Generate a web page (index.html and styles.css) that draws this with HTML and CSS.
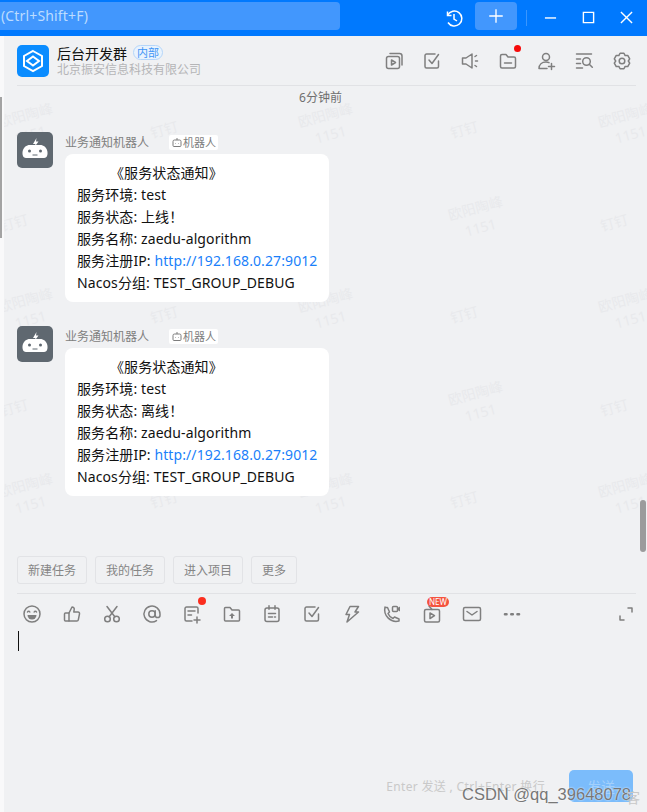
FILE: index.html
```html
<!DOCTYPE html>
<html lang="zh-CN">
<head>
    <meta charset="UTF-8">
    <title>后台开发群</title>
    <link rel="stylesheet" href="styles.css">
</head>
<body>
    <div class="titlebar">
        <div class="search">(Ctrl+Shift+F)</div>
        <svg class="history" viewBox="0 0 20 20"><path d="M3.5 3.5v4h4"/><path d="M3.7 7A7.5 7.5 0 1 1 4 14.5"/><path d="M10 6v5l3 2"/></svg>
        <div class="add"><svg viewBox="0 0 20 20"><path d="M10 2.5v15M2.5 10h15"/></svg></div>
        <div class="sep"></div>
        <div class="win"><svg viewBox="0 0 14 14"><path d="M1 7.5h12"/></svg></div>
        <div class="win"><svg viewBox="0 0 14 14"><path d="M1.5 1.5h11v11h-11z"/></svg></div>
        <div class="win"><svg viewBox="0 0 14 14"><path d="M1 1l12 12M13 1L1 13"/></svg></div>
    </div>

    <div class="main">
        <div class="group-head">
            <svg class="logo" viewBox="0 0 32 32">
                <rect width="32" height="32" rx="5" fill="#0a8cff"/>
                <path d="M16 6l9 5v10l-9 5-9-5V11z" fill="none" stroke="#fff" stroke-width="2"/>
                <path d="M16 11.500l6 4.500-6 4.500-6-4.500z" fill="none" stroke="#fff" stroke-width="2"/>
            </svg>
            <div class="group-info">
                <div class="group-title">后台开发群 <span class="badge">内部</span></div>
                <div class="group-sub">北京振安信息科技有限公司</div>
            </div>
            <div class="head-icons">
                <svg class="ico" viewBox="0 0 20 20"><rect x="2.500" y="5.500" width="13" height="12" rx="2"/><path d="M6 2.500h9.500a2.500 2.500 0 0 1 2.500 2.500v9"/><path d="M7.500 9l4 2.500-4 2.500z"/></svg>
                <svg class="ico" viewBox="0 0 20 20"><path d="M16.500 10v5.500a1.500 1.500 0 0 1-1.500 1.500H4.500A1.500 1.500 0 0 1 3 15.500V4.500A1.500 1.500 0 0 1 4.500 3H13"/><path d="M7 9l3 3.500L16.500 3.500"/></svg>
                <svg class="ico" viewBox="0 0 20 20"><path d="M2.500 7h3.500l6-4v14l-6-4H2.500z"/><path d="M15 5.500l1.500-1M15.500 10h2M15 14.500l1.500 1"/></svg>
                <span class="ico-wrap">
                    <svg class="ico" viewBox="0 0 20 20"><path d="M2.500 5A1.500 1.500 0 0 1 4 3.500h4l2 2.500h6A1.500 1.500 0 0 1 17.500 7.500v8A1.500 1.500 0 0 1 16 17H4a1.500 1.500 0 0 1-1.500-1.500z"/><path d="M6.500 12h7"/></svg>
                    <i class="dot dot-head"></i>
                </span>
                <svg class="ico" viewBox="0 0 20 20"><circle cx="10" cy="6" r="3.500"/><path d="M3 17.500c0-4 3-6.500 7-6.500 1.200 0 2.200.2 3 .6M3 17.500h8"/><path d="M15.500 12.500v6M12.500 15.500h6"/></svg>
                <svg class="ico" viewBox="0 0 20 20"><path d="M2.500 3h15M2.500 8h4M2.500 12.500h4M2.500 17h6"/><circle cx="12.500" cy="10.500" r="3.800"/><path d="M15.300 13.300l3 3"/></svg>
                <svg class="ico" viewBox="0 0 20 20"><path d="M11.940 2.240H8.060L6.850 4.540 4.250 4.440 2.310 7.790 3.700 10 2.310 12.210 4.250 15.560 6.850 15.460 8.060 17.760H11.940L13.150 15.460 15.750 15.560 17.690 12.210 16.300 10 17.690 7.790 15.750 4.440 13.150 4.540z"/><circle cx="10" cy="10" r="2.800"/></svg>
            </div>
        </div>

        <div class="chat">
            <div class="marks">
                <div class="mark">欧阳陶峰<br>1151</div><div class="mark-short">钉钉</div><div class="mark">欧阳陶峰<br>1151</div><div class="mark-short">钉钉</div><div class="mark">欧阳陶峰<br>1151</div>
                <div class="mark-short">钉钉</div><div class="mark">欧阳陶峰<br>1151</div><div class="mark-short">钉钉</div><div class="mark">欧阳陶峰<br>1151</div><div class="mark-short">钉钉</div>
                <div class="mark">欧阳陶峰<br>1151</div><div class="mark-short">钉钉</div><div class="mark">欧阳陶峰<br>1151</div><div class="mark-short">钉钉</div><div class="mark">欧阳陶峰<br>1151</div>
                <div class="mark-short">钉钉</div><div class="mark">欧阳陶峰<br>1151</div><div class="mark-short">钉钉</div><div class="mark">欧阳陶峰<br>1151</div><div class="mark-short">钉钉</div>
                <div class="mark">欧阳陶峰<br>1151</div><div class="mark-short">钉钉</div><div class="mark">欧阳陶峰<br>1151</div><div class="mark-short">钉钉</div><div class="mark">欧阳陶峰<br>1151</div>
            </div>

            <div class="time">6分钟前</div>

            <div class="msg">
                <svg class="avatar" viewBox="0 0 36 36">
                    <rect width="36" height="36" rx="5" fill="#5f6870"/>
                    <path d="M19.500 6l-3.500 6h2.500l-1 3 4-5.500h-2.500z" fill="#fff"/>
                    <path d="M13 13h10c4 0 6 2.500 7 5 1.200 3.500.5 8-3 8H9c-3.500 0-4.200-4.500-3-8 1-2.500 3-5 7-5z" fill="#fff"/>
                    <circle cx="12.500" cy="19" r="1.500" fill="#5f6870"/>
                    <circle cx="23.500" cy="19" r="1.500" fill="#5f6870"/>
                    <path d="M15.500 23h5" stroke="#5f6870" stroke-width="1"/>
                </svg>
                <div>
                    <div class="sender">业务通知机器人
                        <span class="tag"><svg viewBox="0 0 12 12"><path d="M2 5.500a1.500 1.500 0 0 1 1.500-1.500h5A1.500 1.500 0 0 1 10 5.500v4A1 1 0 0 1 9 10.500H3a1 1 0 0 1-1-1zM6 4V2"/><path d="M4.500 7.500h.5M7 7.500h.5"/></svg>机器人</span>
                    </div>
                    <div class="bubble">
                        <div class="notice-title">《服务状态通知》</div>
                        <div>服务环境: test</div>
                        <div>服务状态: 上线！</div>
                        <div>服务名称: zaedu-algorithm</div>
                        <div>服务注册IP: <a href="#">http://192.168.0.27:9012</a></div>
                        <div>Nacos分组: TEST_GROUP_DEBUG</div>
                    </div>
                </div>
            </div>

            <div class="msg">
                <svg class="avatar" viewBox="0 0 36 36">
                    <rect width="36" height="36" rx="5" fill="#5f6870"/>
                    <path d="M19.500 6l-3.500 6h2.500l-1 3 4-5.500h-2.500z" fill="#fff"/>
                    <path d="M13 13h10c4 0 6 2.500 7 5 1.200 3.500.5 8-3 8H9c-3.500 0-4.200-4.500-3-8 1-2.500 3-5 7-5z" fill="#fff"/>
                    <circle cx="12.500" cy="19" r="1.500" fill="#5f6870"/>
                    <circle cx="23.500" cy="19" r="1.500" fill="#5f6870"/>
                    <path d="M15.500 23h5" stroke="#5f6870" stroke-width="1"/>
                </svg>
                <div>
                    <div class="sender">业务通知机器人
                        <span class="tag"><svg viewBox="0 0 12 12"><path d="M2 5.500a1.500 1.500 0 0 1 1.500-1.500h5A1.500 1.500 0 0 1 10 5.500v4A1 1 0 0 1 9 10.500H3a1 1 0 0 1-1-1zM6 4V2"/><path d="M4.500 7.500h.5M7 7.500h.5"/></svg>机器人</span>
                    </div>
                    <div class="bubble">
                        <div class="notice-title">《服务状态通知》</div>
                        <div>服务环境: test</div>
                        <div>服务状态: 离线！</div>
                        <div>服务名称: zaedu-algorithm</div>
                        <div>服务注册IP: <a href="#">http://192.168.0.27:9012</a></div>
                        <div>Nacos分组: TEST_GROUP_DEBUG</div>
                    </div>
                </div>
            </div>

            <div class="scroll-right"></div>
        </div>

        <div class="quick">
            <button class="quick-btn">新建任务</button>
            <button class="quick-btn">我的任务</button>
            <button class="quick-btn">进入项目</button>
            <button class="quick-btn">更多</button>
        </div>

        <div class="toolbar">
            <svg class="ico" viewBox="0 0 20 20"><circle cx="10" cy="10" r="8"/><path d="M5.500 8c.5-1 1.800-1 2.300 0M12.200 8c.5-1 1.800-1 2.300 0"/><path d="M5.500 11h9a4.500 4.500 0 0 1-9 0z" class="fill"/></svg>
            <svg class="ico" viewBox="0 0 20 20"><path d="M7 9l3-6c1.500 0 2.500 1 2.200 2.500L11.800 8H16a1.500 1.500 0 0 1 1.500 1.800l-1.200 6A1.500 1.500 0 0 1 14.800 17H7z"/><path d="M7 9H3.500A1 1 0 0 0 2.500 10v6a1 1 0 0 0 1 1H7"/></svg>
            <svg class="ico" viewBox="0 0 20 20"><circle cx="5.500" cy="15" r="2.800"/><circle cx="14.500" cy="15" r="2.800"/><path d="M7.200 12.800L15 2.500M12.800 12.800L5 2.500"/></svg>
            <svg class="ico" viewBox="0 0 20 20"><circle cx="10" cy="10" r="3.200"/><path d="M13.200 6.800v4.400a2.400 2.400 0 0 0 4.800 0V10a8 8 0 1 0-3.500 6.600"/></svg>
            <span class="ico-wrap">
                <svg class="ico" viewBox="0 0 20 20"><path d="M16 9V4.500A1.500 1.500 0 0 0 14.500 3h-10A1.500 1.500 0 0 0 3 4.500v11A1.500 1.500 0 0 0 4.500 17H10"/><path d="M6 7h7M6 11h3.500"/><path d="M15 13v6M12 16h6"/></svg>
                <i class="dot dot-note"></i>
            </span>
            <svg class="ico" viewBox="0 0 20 20"><path d="M2.500 4.500A1 1 0 0 1 3.500 3.500h4.500l2 2.500h6.500a1 1 0 0 1 1 1v9a1 1 0 0 1-1 1h-13a1 1 0 0 1-1-1z"/><path d="M10 9l3 3h-2v2.500H9V12H7z" class="fill"/></svg>
            <svg class="ico" viewBox="0 0 20 20"><rect x="3" y="4" width="14" height="13.500" rx="2"/><path d="M7 1.800v3.500M13 1.800v3.500M6.500 9.500h7M6.500 13h4M12.500 13h1"/></svg>
            <svg class="ico" viewBox="0 0 20 20"><path d="M16.500 10v5.500a1.500 1.500 0 0 1-1.500 1.500H4.500A1.500 1.500 0 0 1 3 15.500V4.500A1.500 1.500 0 0 1 4.500 3H13"/><path d="M7 9l3 3.500L16.500 3.500"/></svg>
            <svg class="ico" viewBox="0 0 20 20"><path d="M8 2.500h8.500L13 8h3.500L5 18l2.500-7.500H4z"/></svg>
            <svg class="ico" viewBox="0 0 20 20"><path d="M3 3.500h2.500L7.500 8 6 9.500c1 2.500 2.500 4 5 5l1.500-1.500 4.500 2v2c-8 2-16-5-14-14z"/><rect x="10.500" y="2.500" width="5" height="5" rx="1"/><path d="M15.500 4l2.500-1.500v5L15.500 6" class="fill"/></svg>
            <span class="ico-wrap">
                <svg class="ico" viewBox="0 0 20 20"><rect x="2.500" y="5.500" width="15" height="12.500" rx="1.500"/><path d="M7 2l3 3.500"/><path d="M8 9l4.500 2.700L8 14.500z"/></svg>
                <span class="new-tag">NEW</span>
            </span>
            <svg class="ico" viewBox="0 0 20 20"><rect x="1.500" y="3.500" width="17" height="13" rx="1.500"/><path d="M5 7.500l5 3.500 5-3.500"/></svg>
            <svg class="ico" viewBox="0 0 20 20"><path d="M3 10.200h1.500M9.300 10.200h1.500M15.500 10.200H17" stroke-width="2.600"/></svg>
            <svg class="ico expand" viewBox="0 0 14 14"><path d="M9 1h4v4M1 9v4h4"/></svg>
        </div>

        <div class="editor"><div class="caret"></div></div>

        <div class="send-row">
            <span class="hint">Enter 发送 , Ctrl+Enter 换行</span>
            <button class="send">发送</button>
        </div>
    </div>

    <div class="csdn">CSDN @qq_39648078</div>
    <div class="csdn-back">客</div>
    <div class="scroll-left"></div>
</body>
</html>
```

FILE: styles.css
```css
*{
    box-sizing: border-box;
    font-family: "Noto Sans", "Noto Sans CJK SC", sans-serif;
}

body{
    margin: 0;
    height: 812px;
    overflow: hidden;
    display: flex;
    flex-direction: column;
    position: relative;
    background-color: #f0f1f3;
}

.titlebar{
    display: flex;
    align-items: center;
    height: 36px;
    flex-shrink: 0;
    background-color: #0079fe;
}

.search{
    width: 340px;
    height: 28px;
    line-height: 28px;
    margin-top: -4px;
    padding-left: 1px;
    font-size: 14px;
    letter-spacing: .15px;
    color: #bcdcff;
    background-color: #4297fd;
    border-radius: 0 4px 4px 0;
}

.history{
    width: 20px;
    height: 20px;
    margin-left: 104px;
}

.titlebar svg{
    fill: none;
    stroke: #fff;
    stroke-width: 1.5;
}

.add{
    display: flex;
    align-items: center;
    justify-content: center;
    width: 42px;
    height: 28px;
    margin-left: 11px;
    margin-top: -4px;
    background-color: #4297fd;
    border-radius: 4px;
}

.add svg{
    width: 18px;
    height: 18px;
}

.sep{
    width: 1px;
    height: 16px;
    margin: 0 4px 0 9px;
    background-color: #3a96fe;
}

.win{
    display: flex;
    align-items: center;
    justify-content: center;
    width: 38px;
    height: 36px;
}

.win svg{
    width: 13px;
    height: 13px;
    margin-top: -2px;
}

.main{
    flex: 1;
    display: flex;
    flex-direction: column;
    border-left: 4px solid #f9f9fa;
    min-height: 0;
}

.group-head{
    display: flex;
    align-items: center;
    height: 50px;
    flex-shrink: 0;
    margin: 0 11px 0 13px;
    border-bottom: 1px solid #e1e2e5;
}

.logo{
    width: 32px;
    height: 32px;
    margin-right: 8px;
}

.group-title{
    display: flex;
    align-items: center;
    gap: 2px;
    height: 18px;
    font-size: 14px;
    color: #111;
}

.badge{
    height: 15px;
    line-height: 13px;
    padding: 0 3px;
    margin-left: 4px;
    font-size: 11px;
    color: #3f95f6;
    background-color: #e9f3fd;
    border: 1px solid #b5d6fa;
    border-radius: 8px;
}

.group-sub{
    height: 16px;
    line-height: 16px;
    font-size: 12px;
    color: #b5b5b7;
}

.head-icons{
    display: flex;
    align-items: center;
    gap: 18px;
    margin-left: auto;
    margin-right: 4px;
}

.ico{
    display: block;
    width: 20px;
    height: 20px;
    fill: none;
    stroke: #7f7f7f;
    stroke-width: 1.5;
    stroke-linecap: round;
    stroke-linejoin: round;
}

.ico .fill{
    fill: #7f7f7f;
    stroke: none;
}

.ico-wrap{
    position: relative;
    display: block;
}

.dot{
    position: absolute;
    display: block;
    border-radius: 50%;
}

.dot-head{
    top: -6px;
    right: -3px;
    width: 7px;
    height: 7px;
    background-color: #f60a0a;
}

.dot-note{
    top: -7px;
    right: -4px;
    width: 8px;
    height: 8px;
    background-color: #fb2e1f;
}

.new-tag{
    position: absolute;
    top: -7px;
    left: 5px;
    width: 22px;
    height: 10px;
    line-height: 10px;
    text-align: center;
    font-size: 8px;
    color: #fff;
    background-color: #f4533f;
    border-radius: 5px;
}

.chat{
    position: relative;
    height: 470px;
    flex-shrink: 0;
    overflow: hidden;
}

.marks{
    position: absolute;
    top: 19px;
    left: -4px;
    display: grid;
    grid-template-columns: repeat(5, 150px);
    grid-auto-rows: 92.5px;
}

.mark,
.mark-short{
    font-size: 14px;
    line-height: 20px;
    height: 40px;
    color: #e8e9ec;
    transform: rotate(-15deg);
}

.mark{
    width: 56px;
    text-align: center;
}

.mark-short{
    width: 36px;
    height: 20px;
    margin-top: 14px;
}

.time{
    position: relative;
    height: 24px;
    line-height: 24px;
    margin-bottom: 22px;
    padding-right: 10px;
    text-align: center;
    font-size: 12px;
    color: #6f6f6f;
}

.msg{
    position: relative;
    display: flex;
    gap: 12px;
    margin: 0 0 24px 13px;
}

.avatar{
    width: 36px;
    height: 36px;
    flex-shrink: 0;
}

.sender{
    display: flex;
    align-items: center;
    height: 20px;
    margin-bottom: 2px;
    font-size: 12px;
    color: #808080;
}

.tag{
    display: flex;
    align-items: center;
    height: 15px;
    margin-left: 20px;
    padding: 0 2px;
    font-size: 11px;
    color: #7d7d7d;
    background-color: #fff;
    border-radius: 2px;
}

.tag svg{
    width: 12px;
    height: 12px;
    fill: none;
    stroke: #7d7d7d;
    stroke-width: 1;
}

.bubble{
    width: 264px;
    padding: 8px 12px;
    font-size: 14px;
    line-height: 22px;
    letter-spacing: .1px;
    white-space: nowrap;
    color: #111;
    background-color: #fff;
    border-radius: 8px;
}

.bubble a{
    color: #1a7ffa;
    text-decoration: none;
}

.notice-title{
    padding-left: 33px;
}

.scroll-right{
    position: absolute;
    top: 414px;
    right: 1px;
    width: 6px;
    height: 52px;
    background-color: #9b9b9c;
    border-radius: 3px;
}

.quick{
    display: flex;
    gap: 8px;
    height: 28px;
    flex-shrink: 0;
    margin: 0 11px 9px 13px;
}

.quick-btn{
    height: 28px;
    padding: 0 10px;
    font-size: 12px;
    color: #858585;
    background: none;
    border: 1px solid #e2e3e6;
    border-radius: 3px;
}

.toolbar{
    display: flex;
    align-items: center;
    gap: 20px;
    height: 41px;
    flex-shrink: 0;
    margin: 0 11px 0 13px;
    padding-left: 5px;
    border-top: 1px solid #e1e2e5;
}

.expand{
    width: 14px;
    height: 14px;
    margin-left: auto;
    margin-right: 3px;
    stroke-width: 1.5;
}

.editor{
    flex: 1;
    margin-left: 14px;
}

.caret{
    width: 1px;
    height: 20px;
    margin-top: -3px;
    background-color: #111;
}

.send-row{
    display: flex;
    align-items: center;
    justify-content: flex-end;
    gap: 24px;
    height: 42px;
    padding: 0 14px 10px 0;
}

.hint{
    font-size: 12px;
    letter-spacing: .33px;
    color: #c9c9c9;
}

.send{
    width: 64px;
    height: 32px;
    font-size: 14px;
    color: #a3d0fb;
    background-color: #7bbcfb;
    border: none;
    border-radius: 5px;
}

.csdn{
    position: absolute;
    top: 784px;
    left: 462px;
    font-family: "Liberation Sans", sans-serif;
    font-size: 16.5px;
    line-height: 20px;
    color: #777;
    text-shadow: 0 0 2px #fff;
}

.csdn-back{
    position: absolute;
    top: 789px;
    left: 626px;
    font-size: 14px;
    line-height: 18px;
    color: #c8c8c8;
}

.scroll-left{
    position: absolute;
    top: 97px;
    left: 0;
    width: 2px;
    height: 141px;
    background-color: #a3a3a3;
}
```
